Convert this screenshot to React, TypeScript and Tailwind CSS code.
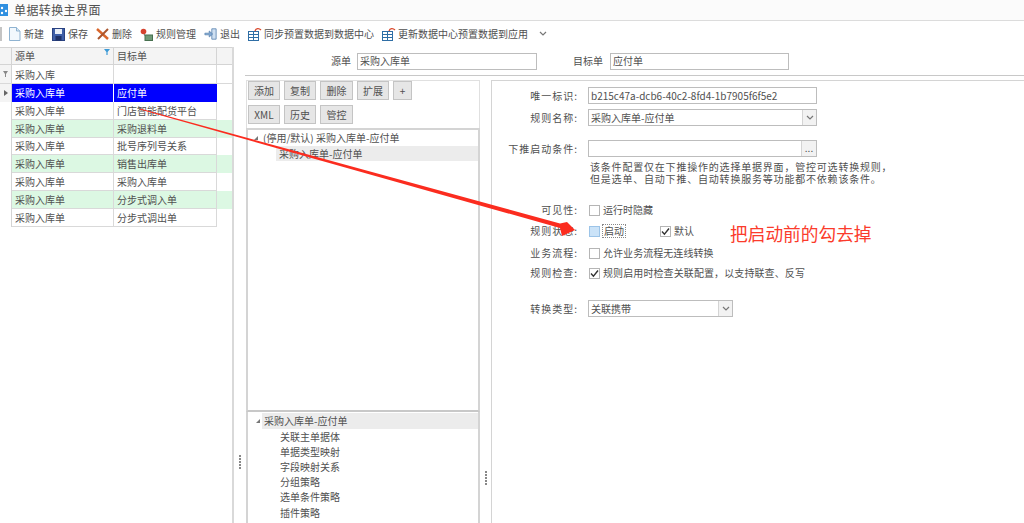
import React from 'react';

const font = '[font-family:"Noto_Sans_CJK_SC","Liberation_Sans",sans-serif]';

const rows = [
  ['采购入库单', '门店智能配货平台', false],
  ['采购入库单', '采购退料单', true],
  ['采购入库单', '批号序列号关系', false],
  ['采购入库单', '销售出库单', true],
  ['采购入库单', '采购入库单', false],
  ['采购入库单', '分步式调入单', true],
  ['采购入库单', '分步式调出单', false],
] as [string, string, boolean][];

const Tool = ({ icon, label }: { icon: React.ReactNode; label: string }) => (
  <div className="flex items-center gap-[3px]">
    <div className="w-[13px] flex justify-center shrink-0">{icon}</div>
    <span>{label}</span>
  </div>
);

const TableIcon = () => (
  <svg width="14" height="14" viewBox="0 0 14 14" className="shrink-0">
    <rect x="0.5" y="4.5" width="10" height="9" fill="#fff" stroke="#2f6ea5" />
    <path d="M1 7.5h9M1 10.5h9M5.5 5v8" stroke="#2f6ea5" />
    <path d="M7 4c1-3 4-3 6-1" fill="none" stroke="#d9472b" strokeWidth="1.3" />
  </svg>
);

const Btn = ({ label, w }: { label: string; w: string }) => (
  <div className={`${w} h-[19px] flex items-center justify-center bg-[#e6e6e6] border border-[#c4c4c4] text-[10px]`}>
    {label}
  </div>
);

const FormRow = ({ label, className, children }: { label: string; className: string; children: React.ReactNode }) => (
  <div className={`flex items-center ${className}`}>
    <div className="w-[86px] text-right tracking-[1px]">{label}</div>
    <div className="ml-[10px] flex items-center">{children}</div>
  </div>
);

const Check = ({ on }: { on?: boolean }) => (
  <div className="w-[11px] h-[11px] ml-[1px] border border-[#b5b5b5] bg-white flex items-center justify-center">
    {on && (
      <svg width="9" height="9" viewBox="0 0 9 9">
        <path d="M1 4.5l2.4 2.6L8 1.5" fill="none" stroke="#333" strokeWidth="1.4" />
      </svg>
    )}
  </div>
);

const Chevron = () => (
  <svg width="8" height="6" viewBox="0 0 8 6">
    <path d="M1 1l3 3 3-3" fill="none" stroke="#777" strokeWidth="1.2" />
  </svg>
);

const Dots = () => (
  <div className="flex flex-col gap-[1px] items-center">
    {[0, 1, 2, 3, 4].map((i) => (
      <div key={i} className="w-[2px] h-[2px] bg-[#888]" />
    ))}
  </div>
);

const App: React.FC = () => {
  return (
    <div className={`${font} relative w-[1024px] h-[523px] overflow-hidden bg-white text-[10px] leading-none text-[#505050]`}>
      {/* title */}
      <div className="h-[21px] flex items-center border-b border-[#dcdcdc] bg-[#fbfbfb]">
        <svg width="9" height="14" viewBox="0 0 9 14" className="shrink-0">
          <rect x="-4" y="1" width="12" height="12" fill="#2f8fe0" />
          <circle cx="2" cy="5" r="1.2" fill="#fff" />
          <circle cx="6" cy="8" r="1.2" fill="#fff" />
          <circle cx="2" cy="10" r="1.2" fill="#fff" />
        </svg>
        <span className="ml-[5px] text-[12px] tracking-[0.4px]">单据转换主界面</span>
      </div>

      {/* toolbar */}
      <div className="h-[26px] flex items-center text-[10px]">
        <div className="w-[2px] h-[14px] bg-[#c4c4c4] mr-[6px]" />
        <div className="flex items-center gap-[8px]">
          <Tool
            label="新建"
            icon={
              <svg width="13" height="14" viewBox="0 0 13 14">
                <path d="M1.5.5h7l3.5 3.5v9.5H1.5z" fill="#f2f8fd" stroke="#8fb3d1" />
                <path d="M8.5.5V4H12" fill="#d8e8f4" stroke="#8fb3d1" />
              </svg>
            }
          />
          <Tool
            label="保存"
            icon={
              <svg width="13" height="13" viewBox="0 0 13 13">
                <rect x="0.5" y="0.5" width="12" height="12" fill="#3f5fa8" stroke="#2a4281" />
                <rect x="3" y="1" width="7" height="5" fill="#e8eef7" />
                <rect x="3.5" y="8" width="6" height="4.5" fill="#1f3166" />
              </svg>
            }
          />
          <Tool
            label="删除"
            icon={
              <svg width="13" height="12" viewBox="0 0 13 12">
                <path d="M1 1l11 10" stroke="#d9662b" strokeWidth="2.4" />
                <path d="M12 1L2 11" stroke="#a9562f" strokeWidth="2" />
              </svg>
            }
          />
          <Tool
            label="规则管理"
            icon={
              <svg width="13" height="13" viewBox="0 0 13 13">
                <circle cx="3.5" cy="3.5" r="2.8" fill="#d5432f" />
                <path d="M4 6l2 3" stroke="#777" />
                <rect x="5" y="7" width="7.5" height="5.5" fill="#6f9a78" stroke="#47704f" />
              </svg>
            }
          />
          <Tool
            label="退出"
            icon={
              <svg width="14" height="14" viewBox="0 0 15 14">
                <path d="M9 1h5v12H9z" fill="#cfe0f2" stroke="#5e87b3" />
                <path d="M1 6h5V3.5L10 7l-4 3.5V8H1z" fill="#7fa6d1" stroke="#4b77a8" strokeWidth="0.7" />
              </svg>
            }
          />
          <Tool label="同步预置数据到数据中心" icon={<TableIcon />} />
          <Tool label="更新数据中心预置数据到应用" icon={<TableIcon />} />
          <div className="ml-[3px]">
            <Chevron />
          </div>
        </div>
      </div>

      <div className="flex h-[476px]">
        {/* left grid */}
        <div className="w-[234px] shrink-0 border-r-2 border-[#d9d9d9]">
          <div className="flex h-[18px] items-stretch bg-[#f4f4f4] border-y border-[#d4d4d4]">
            <div className="w-[12px] border-r border-[#d4d4d4]" />
            <div className="w-[102px] border-r border-[#d4d4d4] relative flex items-center pl-[3px]">
              源单
              <svg width="6" height="6" viewBox="0 0 6 6" className="absolute right-[3px] top-[1px]">
                <path d="M0 0h6L3.6 3v3H2.4V3z" fill="#3c9ad6" />
              </svg>
            </div>
            <div className="w-[103px] border-r border-[#d4d4d4] flex items-center pl-[3px]">目标单</div>
          </div>
          <div className="flex h-[19px] items-stretch border-b border-[#d9d9d9]">
            <div className="w-[12px] bg-[#f4f4f4] border-r border-[#d4d4d4] flex items-center justify-center">
              <svg width="5" height="6" viewBox="0 0 5 6">
                <path d="M0 0h5L3 3v3H2V3z" fill="#888" />
              </svg>
            </div>
            <div className="w-[102px] border-r border-[#d9d9d9] flex items-center pl-[3px] pt-[1px]">采购入库</div>
            <div className="w-[103px] border-r border-[#d9d9d9]" />
          </div>
          <div className="flex h-[18px] items-stretch">
            <div className="w-[12px] bg-[#f4f4f4] border-r border-[#d4d4d4] flex items-center justify-center">
              <svg width="4" height="6" viewBox="0 0 4 6">
                <path d="M0 0l4 3-4 3z" fill="#666" />
              </svg>
            </div>
            <div className="w-[102px] bg-[#0000ff] text-white border-r border-white flex items-center pl-[3px]">采购入库单</div>
            <div className="w-[103px] bg-[#0000ff] text-white flex items-center pl-[3px]">应付单</div>
          </div>
          {rows.map(([a, b, green], i) => (
            <div key={i} className={`flex h-[17.8px] items-stretch ${green ? 'bg-[#dcf8e3]' : 'bg-white'}`}>
              <div className="w-[12px] bg-white border-r border-[#d4d4d4]" />
              <div className="w-[102px] border-r border-b border-[#d9d9d9] flex items-center pl-[3px] pt-[1px]">{a}</div>
              <div className="w-[103px] border-r border-b border-[#d9d9d9] flex items-center pl-[3px] pt-[1px]">{b}</div>
            </div>
          ))}
        </div>

        {/* right part */}
        <div className="flex-1 flex flex-col">
          <div className="ml-[11px] h-[29px] flex items-center border-b border-[#c8c8c8]">
            <span className="ml-[86px]">源单</span>
            <div className="ml-[6px] w-[180px] h-[17px] border border-[#bdbdbd] flex items-center pl-[2px] pb-[1px]">采购入库单</div>
            <span className="ml-[36px]">目标单</span>
            <div className="ml-[7px] w-[179px] h-[17px] border border-[#bdbdbd] flex items-center pl-[2px] pb-[1px]">应付单</div>
          </div>

          <div className="flex flex-1 pt-[4px]">
            <div className="w-[11px] shrink-0 flex justify-center pt-[375px]">
              <Dots />
            </div>
            <div className="w-[235px] shrink-0 pl-[1px] flex flex-col">
              <div className="h-[48px] border border-[#e0e0e0] border-b-0 pl-[1px] flex flex-col gap-[5px] w-[234px]">
                <div className="flex gap-[4px]">
                  <Btn label="添加" w="w-[32px]" />
                  <Btn label="复制" w="w-[32px]" />
                  <Btn label="删除" w="w-[33px]" />
                  <Btn label="扩展" w="w-[32px]" />
                  <Btn label="+" w="w-[19px]" />
                </div>
                <div className="flex gap-[4px]">
                  <Btn label="XML" w="w-[32px]" />
                  <Btn label="历史" w="w-[32px]" />
                  <Btn label="管控" w="w-[33px]" />
                </div>
              </div>
              <div className="h-[284px] w-[234px] border-2 border-[#d4d4d4] border-b-[#c8c8c8]">
                <div className="h-[16px] flex items-center pl-[5px]">
                  <svg width="6" height="6" viewBox="0 0 6 6">
                    <path d="M5 1v4H1z" fill="#777" />
                  </svg>
                  <span className="ml-[4px]">(停用/默认) 采购入库单-应付单</span>
                </div>
                <div className="ml-[28px] h-[15px] bg-[#ececec] flex items-center pl-[3px]">采购入库单-应付单</div>
              </div>
              <div className="flex-1 w-[234px] border-x-2 border-[#d4d4d4]">
                <div className="mt-[1px] h-[16px] flex items-center pl-[7px]">
                  <svg width="6" height="6" viewBox="0 0 6 6" className="shrink-0">
                    <path d="M5 1v4H1z" fill="#777" />
                  </svg>
                  <span className="ml-[1px] flex-1 h-full bg-[#ececec] flex items-center pl-[2px]">采购入库单-应付单</span>
                </div>
                {['关联主单据体', '单据类型映射', '字段映射关系', '分组策略', '选单条件策略', '插件策略'].map((t) => (
                  <div key={t} className="h-[15.2px] pl-[32px] flex items-center">{t}</div>
                ))}
              </div>
            </div>

            <div className="w-[11px] shrink-0 flex justify-center pt-[391px]">
              <Dots />
            </div>

            {/* right form */}
            <div className="flex-1 border-l border-t border-[#d4d4d4] pt-[6px]">
              <FormRow label="唯一标识:" className="h-[17px]">
                <div className="w-[229px] h-[17px] border border-[#bdbdbd] flex items-center pl-[2px]">b215c47a-dcb6-40c2-8fd4-1b7905f6f5e2</div>
              </FormRow>
              <FormRow label="规则名称:" className="h-[17px] mt-[5px]">
                <div className="w-[229px] h-[17px] border border-[#bdbdbd] flex items-center pl-[2px] justify-between">
                  采购入库单-应付单
                  <div className="w-[14px] h-full bg-[#f2f2f2] border-l border-[#d4d4d4] flex items-center justify-center">
                    <Chevron />
                  </div>
                </div>
              </FormRow>
              <FormRow label="下推启动条件:" className="h-[17px] mt-[14px]">
                <div className="w-[229px] h-[17px] border border-[#bdbdbd] flex justify-end">
                  <div className="w-[15px] bg-[#f2f2f2] border-l border-[#d4d4d4] text-center leading-[13px]">...</div>
                </div>
              </FormRow>
              <div className="ml-[96px] mt-[4px] pl-[2px] leading-[12px] tracking-[0.8px] whitespace-nowrap">
                <div>该条件配置仅在下推操作的选择单据界面，管控可选转换规则，</div>
                <div>但是选单、自动下推、自动转换服务等功能都不依赖该条件。</div>
              </div>
              <FormRow label="可见性:" className="h-[14px] mt-[18px]">
                <Check />
                <span className="ml-[3px]">运行时隐藏</span>
              </FormRow>
              <FormRow label="规则状态:" className="h-[14px] mt-[7px]">
                <div className="w-[11px] h-[11px] ml-[1px] border border-[#9cc4e8] bg-[#cbe3f8]" />
                <span className="ml-[2px] h-[14px] px-[1px] flex items-center border border-dotted border-[#888]">启动</span>
                <div className="ml-[33px]">
                  <Check on />
                </div>
                <span className="ml-[3px]">默认</span>
              </FormRow>
              <FormRow label="业务流程:" className="h-[14px] mt-[8px]">
                <Check />
                <span className="ml-[3px] tracking-[0.05px]">允许业务流程无连线转换</span>
              </FormRow>
              <FormRow label="规则检查:" className="h-[14px] mt-[6px]">
                <Check on />
                <span className="ml-[3px] tracking-[0.1px]">规则启用时检查关联配置，以支持联查、反写</span>
              </FormRow>
              <FormRow label="转换类型:" className="h-[17px] mt-[20px]">
                <div className="w-[145px] h-[17px] border border-[#bdbdbd] flex items-center pl-[2px] justify-between">
                  关联携带
                  <div className="w-[14px] h-full bg-[#f2f2f2] border-l border-[#d4d4d4] flex items-center justify-center">
                    <Chevron />
                  </div>
                </div>
              </FormRow>
            </div>
          </div>
        </div>
      </div>

      {/* annotation */}
      <span className="absolute left-[730px] top-[225px] text-[17.7px] text-[#fb3b2c] whitespace-nowrap">把启动前的勾去掉</span>
      <svg className="absolute left-0 top-0 pointer-events-none" width="1024" height="523" viewBox="0 0 1024 523">
        <path d="M140 108.5L560 223.5L567 222L575 230L562 236L560 228L140 109.5Z" fill="#fb2c1f" />
      </svg>
    </div>
  );
};

export default App;
